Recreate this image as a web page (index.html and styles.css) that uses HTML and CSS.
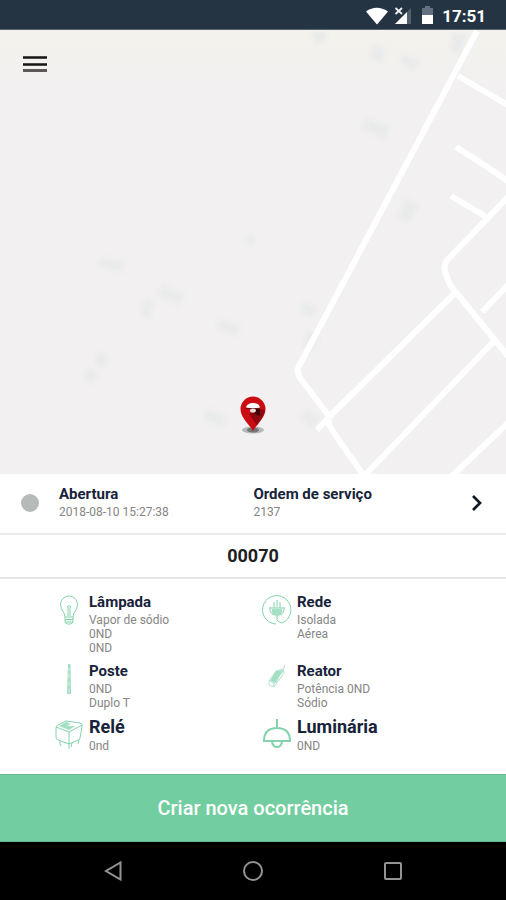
FILE: index.html
```html
<!DOCTYPE html>
<html lang="pt-BR">
<head>
<meta charset="utf-8">
<meta name="viewport" content="width=device-width, initial-scale=1">
<title>Ordem de serviço</title>
<link rel="stylesheet" href="styles.css">
</head>
<body>
<header class="status">
  <svg class="status-icons" width="70" height="20" viewBox="0 0 70 20" aria-hidden="true">
    <path d="M0 5.500Q10.500-2 22 5.500L11.500 18Q11 18.500 10.500 18Z" fill="#fff"/>
    <path d="M45 2V18H29Z" fill="#52616d"/>
    <path d="M41 6V18H29Z" fill="#fff"/>
    <path d="M29.500 2L36 8M36 2L29.500 8" stroke="#eef1f3" stroke-width="1.800"/>
    <path d="M59 0h5v2h3v8H56V2h3Z" fill="#627080"/>
    <path d="M56 9h11v9H56Z" fill="#fff"/>
  </svg>
  <time class="clock">17:51</time>
</header>
<main class="app">
  <section class="map" aria-label="Mapa">
    <svg class="map-art" viewBox="0 0 506 444" preserveAspectRatio="xMidYMid slice" aria-hidden="true">
      <g class="buildings">
        <path d="M311 2l14-1 2 9-11 4ZM371 16l14 2-2 14-13-3ZM403 24l17 6-5 10-14-7ZM452 3l16 2-8 21-10-6ZM367 88l22 9-5 12-22-11ZM406 169l13 6-10 17-12-4Z"/>
        <path d="M102 228l22 3-3 11-23-6ZM163 255l22 10-7 10-21-10ZM145 269l9 3-5 16-8-3ZM221 289l18 7-3 10-20-9ZM97 322l10 4-3 12-8-4ZM89 338l10 6-6 9-9-4ZM247 207l6-3 1 12-6-2ZM207 379l20 8-4 10-19-7Z"/>
        <path d="M305 272l11 5-3 10-13-6ZM307 301l12 6-8 16-7-6ZM306 379l12 9-6 10-11-9Z"/>
      </g>
      <g class="roads">
        <path d="M477 1L299 336Q296 341 300 348L329 386V395L336 406L364 446"/>
        <path d="M458 46L482 60L508 75M456 117L475 129L508 151M451 166L485 186M508 167L450 227Q443 233 445 242L450 255L508 326"/>
        <path d="M455 263L333 383L317 400M508 255L482 282M497 308L364 446M508 393L452 446"/>
      </g>
    </svg>
    <button class="menu" type="button" aria-label="Abrir menu">
      <svg width="24" height="18" viewBox="0 0 24 18" aria-hidden="true"><path d="M0 2.500H24M0 9.500H24" stroke="#151515" stroke-width="2.500"/><path d="M0 15.500H24" stroke="#5c5858" stroke-width="3"/></svg>
    </button>
    <svg class="pin" width="28" height="38" viewBox="0 0 28 38" role="img" aria-label="Local">
      <ellipse cx="14" cy="34" rx="11" ry="3.500" fill="#b5b9b9"/>
      <ellipse cx="14" cy="34" rx="6" ry="2.500" fill="#737777"/>
      <path d="M14 35C11 29 1.500 22 1.500 13A12.500 12.500 0 0 1 26.500 13C26.500 22 17 29 14 35Z" fill="#cb0c12"/>
      <path d="M20 13L26 14C25 20 21 24 18 29L10 18Z" fill="#8c0710"/>
      <path d="M16 13H21V20L15 18Z" fill="#430509"/>
      <path d="M7 11.500Q8 7 14 7T21 11.500Q14 13 7 11.500Z" fill="#fff"/>
      <path d="M7 12.500H21" stroke="#68151a"/>
      <ellipse cx="14" cy="14.500" rx="3" ry="2" fill="#f2dddd"/>
    </svg>
  </section>

  <a class="order" href="#ordem">
    <span class="dot"></span>
    <span class="field"><strong class="title">Abertura</strong><span class="text">2018-08-10 15:27:38</span></span>
    <span class="field"><strong class="title">Ordem de serviço</strong><span class="text">2137</span></span>
    <svg class="chevron" width="12" height="18" viewBox="0 0 12 18" aria-hidden="true"><path d="M2 2L9 9L2 16" fill="none" stroke="#0e1b27" stroke-width="2.700"/></svg>
  </a>
  <h1 class="code">00070</h1>

  <section class="specs">
    <article class="spec">
      <svg class="icon" viewBox="0 0 30 32"><path d="M11 23C11 18 6.500 16.500 6.500 10.500A8.500 8.500 0 0 1 23.500 10.500C23.500 16.500 19 18 19 23ZM11 23V28L13 30H17L19 28V23M11 25.500H19M11 28H19M14 22V13M16 22V13M13 13Q15 10 17 13"/></svg>
      <div><h2 class="title">Lâmpada</h2><p class="text">Vapor de sódio</p><p class="text">0ND</p><p class="text">0ND</p></div>
    </article>
    <article class="spec">
      <svg class="icon" viewBox="0 0 30 32"><path d="M14 30A14.200 14.200 0 1 1 20 29M8 14H22M12 14V8M15 13V6M18 14V8M8 13Q7 19 12 21M22 13Q23 19 18 21M15 22Q14 27 17 28T20 29"/><path class="fill" d="M10 15H20V18Q19 22 15 22T10 18Z"/></svg>
      <div><h2 class="title">Rede</h2><p class="text">Isolada</p><p class="text">Aérea</p></div>
    </article>
    <article class="spec">
      <svg class="icon" viewBox="0 0 30 32"><path class="fill" d="M14 1H16.500L17 31H13Z"/><path class="detail" d="M15 5V8M15 11V15M15 19V23M15 26V29"/></svg>
      <div><h2 class="title">Poste</h2><p class="text">0ND</p><p class="text">Duplo T</p></div>
    </article>
    <article class="spec">
      <svg class="icon" viewBox="0 0 30 32"><path class="fill" d="M14 8L21 7L14 20L8 18Z"/><path class="soft" d="M14 8L21 6L22 10L12 24L7 22V18ZM21 7L23 2M8 18L12 20L21 8M12 20V24"/></svg>
      <div><h2 class="title">Reator</h2><p class="text">Potência 0ND</p><p class="text">Sódio</p></div>
    </article>
    <article class="spec">
      <svg class="icon" viewBox="0 0 30 32"><path d="M2 10Q2 8 4 7L12 3L26 5Q29 6 28 9L26 20Q26 22 24 22L15 26L4 22Q2 21 2 19ZM2 9L15 14L28 7M15 14V26M6 23V26L7 28M15 26V31M18 25L17 29M25 22L24 26"/><path class="fill" d="M5 8L12 4L17 6L13 8L21 8L15 12Z"/></svg>
      <div><h2 class="title title-large">Relé</h2><p class="text">0nd</p></div>
    </article>
    <article class="spec">
      <svg class="icon" viewBox="0 0 30 32"><path class="bold" d="M15 1V10M2 23Q2 10 15 10T28 23ZM10 24Q11 29 15 29T20 24"/></svg>
      <div><h2 class="title title-large">Luminária</h2><p class="text">0ND</p></div>
    </article>
  </section>
  <button class="create" type="button">Criar nova ocorrência</button>
</main>
<nav class="system" aria-label="Sistema">
  <button type="button" aria-label="Voltar"><svg width="20" height="22" viewBox="0 0 20 22"><path d="M17.500 2.500V19.500L3 11Z"/></svg></button>
  <button type="button" aria-label="Início"><svg width="20" height="22" viewBox="0 0 20 22"><circle cx="10" cy="11" r="9"/></svg></button>
  <button type="button" aria-label="Recentes"><svg width="20" height="22" viewBox="0 0 20 22"><rect x="2" y="3" width="16" height="16" rx="1"/></svg></button>
</nav>
</body>
</html>
```
FILE: styles.css
```css
* { box-sizing: border-box; }

body {
  margin: 0;
  min-height: 100vh;
  display: flex;
  flex-direction: column;
  font-family: Roboto, "Liberation Sans", sans-serif;
  background: #fff;
  color: #17233a;
}

h1, h2, p { margin: 0; }
button { border: 0; padding: 0; background: none; font: inherit; cursor: pointer; }
svg { display: block; flex: none; }

.status {
  height: 30px;
  display: flex;
  align-items: center;
  justify-content: flex-end;
  gap: 6px;
  padding: 2px 20px 0;
  background: #243443;
  border-bottom: 1px solid #566572;
  color: #fff;
}
.clock { font-size: 17px; font-weight: 700; line-height: 20px; }

.app { flex: 1; display: flex; flex-direction: column; }

.map {
  position: relative;
  flex: 1;
  min-height: 240px;
  overflow: hidden;
  background: linear-gradient(#f4f2ec, #f2f0f1 60px);
}
.map-art { position: absolute; inset: 0; width: 100%; height: 100%; }
.buildings { fill: #e9ebeb; filter: blur(2px); }
.roads path { fill: none; stroke: #fff; stroke-width: 6; stroke-linejoin: round; }
.menu { position: absolute; top: 25px; left: 23px; }
.pin { position: absolute; bottom: 40px; left: 50%; margin-left: -14px; }

.order {
  display: grid;
  grid-template-columns: 18px 9fr 11fr 12px;
  align-items: center;
  padding: 9px 23px 10px 21px;
  border-bottom: 2px solid #ebebeb;
  color: inherit;
  text-decoration: none;
}
.field { display: flex; flex-direction: column; padding: 0 0 4px 20px; }
.dot { width: 18px; height: 18px; border-radius: 50%; background: #b7babb; }

.title { font-size: 15px; font-weight: 700; line-height: 22px; }
.title-large { font-size: 18px; line-height: 24px; }
.text { font-size: 12px; line-height: 14px; color: #858585; }

.code {
  padding: 10px;
  border-bottom: 2px solid #e5e5e5;
  color: #202020;
  font-size: 18px;
  font-weight: 700;
  line-height: 22px;
  text-align: center;
}

.specs {
  display: grid;
  grid-template-columns: 1fr 1fr;
  row-gap: 5px;
  padding: 12px 36px 21px 54px;
}
.spec { display: flex; gap: 5px; }
.icon { width: 30px; height: 32px; margin-top: 3px; }
.icon path { fill: none; stroke: #82d3ad; stroke-width: 1; }
.icon .fill { fill: #a2dfc3; stroke: none; }
.icon .detail { stroke: #d6f1e4; }
.icon .soft { stroke: #b4e2cd; }
.icon .bold { stroke-width: 2; }

.create {
  height: 68px;
  background: #72cea0;
  border-top: 1px solid #69ba92;
  border-bottom: 1px solid #69ba92;
  color: #fff;
  font-size: 20px;
  font-weight: 500;
}

.system {
  height: 58px;
  display: grid;
  grid-template-columns: repeat(3, 140px);
  justify-content: center;
  justify-items: center;
  align-items: center;
  background: #000;
}
.system path, .system circle, .system rect { fill: none; stroke: #949494; stroke-width: 2; }
```
